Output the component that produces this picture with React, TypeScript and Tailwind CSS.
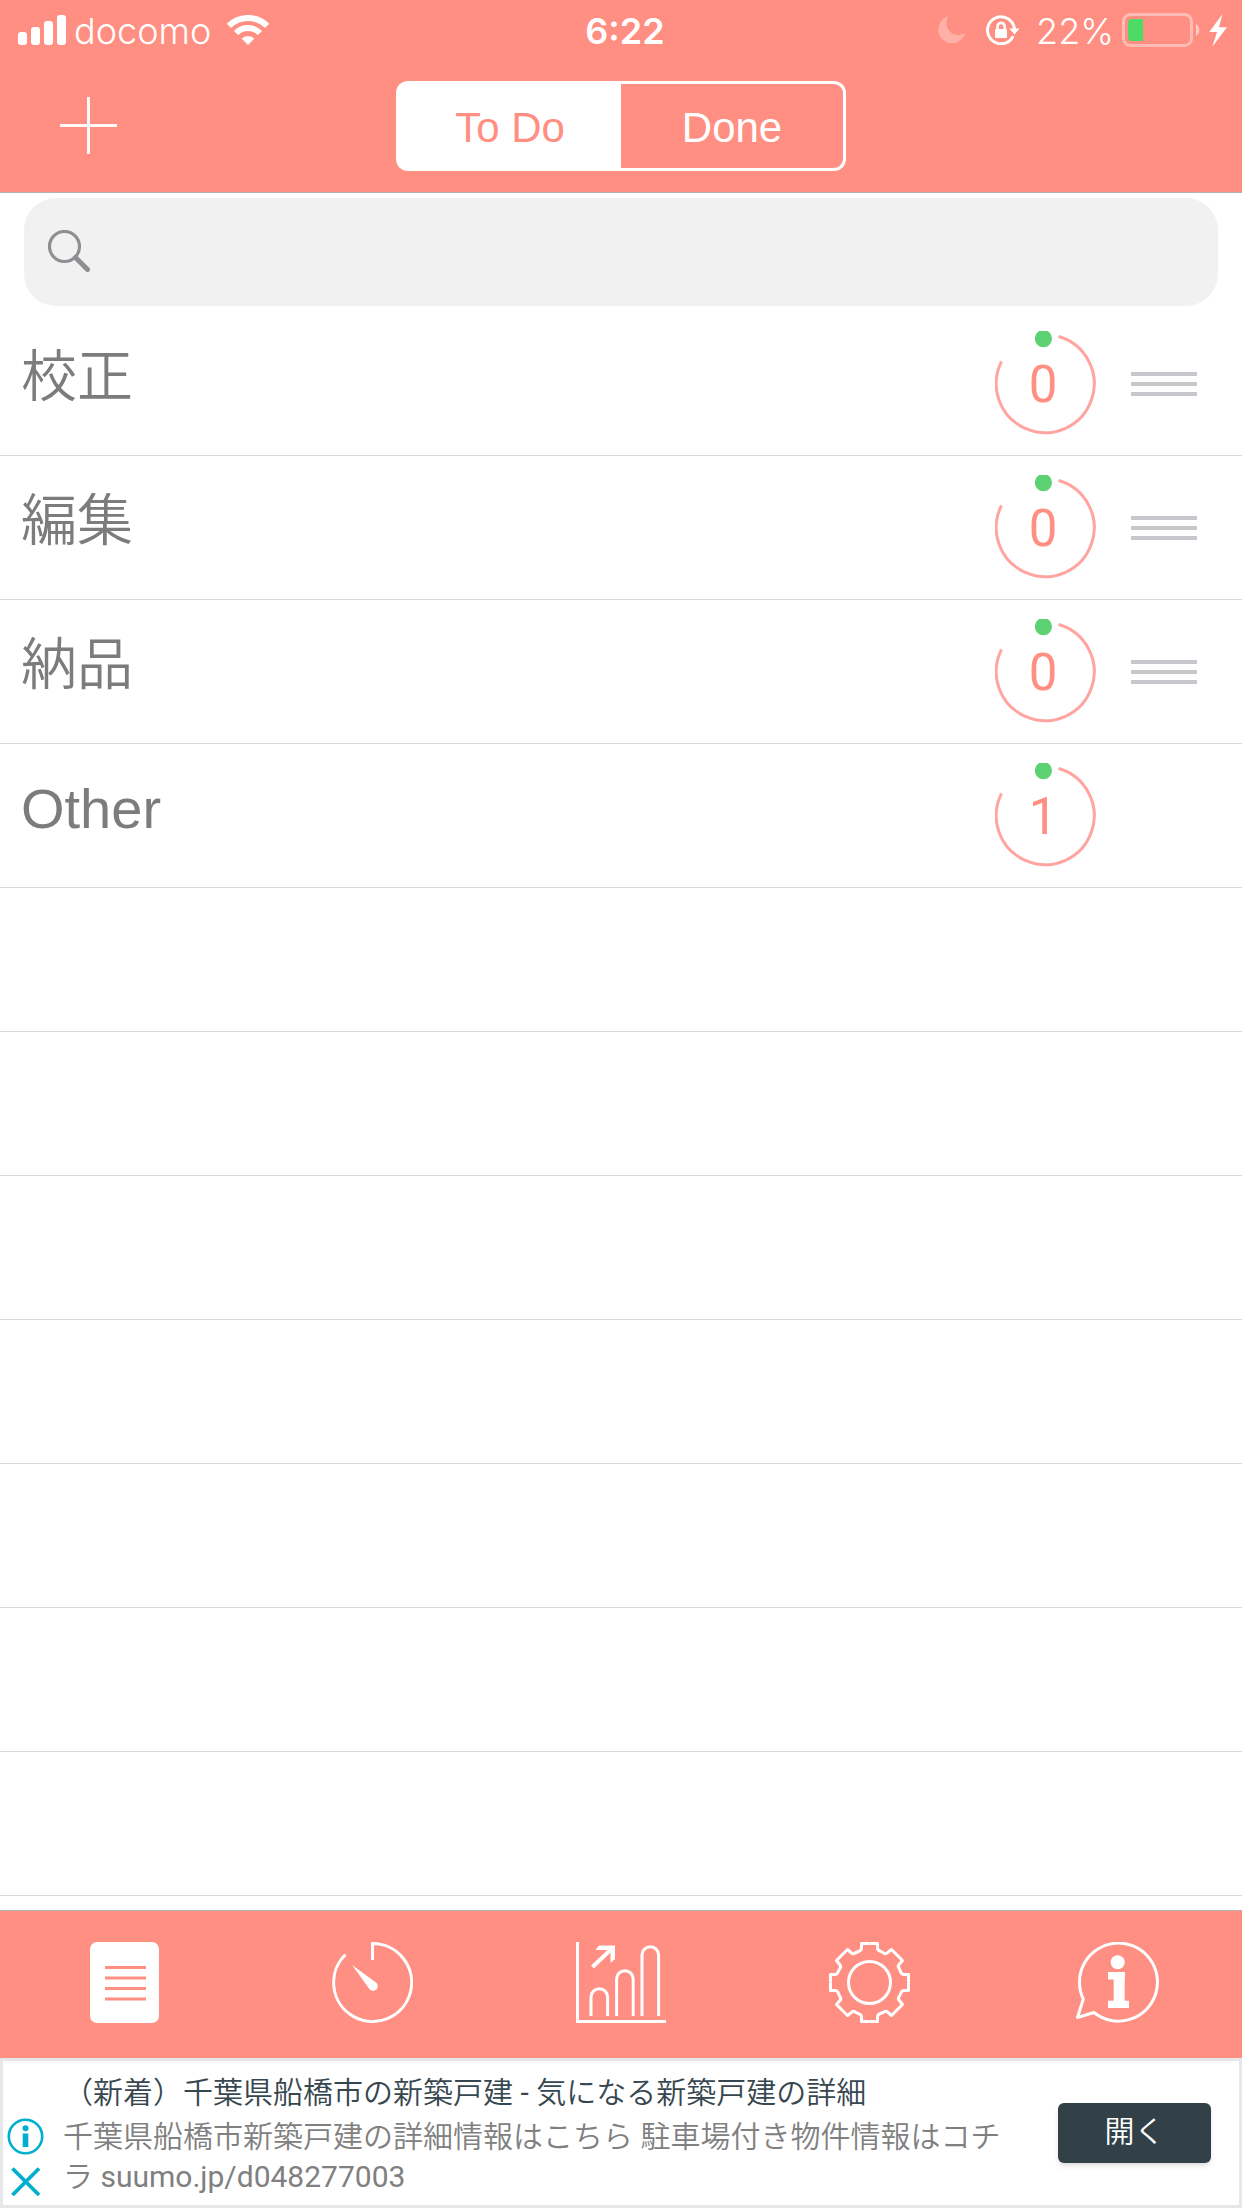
import { useState } from "react";

type Task = { name: string; count: number; movable: boolean };

const TASKS: Task[] = [
  { name: "校正", count: 0, movable: true },
  { name: "編集", count: 0, movable: true },
  { name: "納品", count: 0, movable: true },
  { name: "Other", count: 1, movable: false },
];

const EMPTY_ROWS = 7;

function StatusBar() {
  return (
    <div className="grid h-15 grid-cols-[1fr_auto_1fr] items-center pr-3.5 pl-[18px] font-['Inter',sans-serif] text-[36px] leading-none">
      <div className="flex items-center">
        <svg width="48" height="30" fill="currentColor">
          <rect x="0" y="17" width="9" height="13" rx="3" />
          <rect x="13" y="12" width="9" height="18" rx="3" />
          <rect x="26" y="6" width="9" height="24" rx="3" />
          <rect x="39" y="0" width="9" height="30" rx="3" />
        </svg>
        <span className="ml-2 pt-0.5 font-light">docomo</span>
        <svg className="ml-4" width="42" height="30" fill="none" stroke="currentColor" strokeWidth="6">
          <path d="M1.9 10.9A27 27 0 0 1 40.1 10.9" />
          <path d="M9 18A17 17 0 0 1 33 18" />
          <path d="M21 30L14.6 23.6A9.2 9.2 0 0 1 27.4 23.6Z" fill="currentColor" stroke="none" />
        </svg>
      </div>

      <span className="pt-0.5 pl-1 font-semibold">6:22</span>

      <div className="flex items-center justify-end">
        <svg className="opacity-30" width="28" height="28" fill="currentColor">
          <path d="M10.5.3A13.7 13.7 0 1 0 27.2 17A12 12 0 0 1 10.5.3Z" />
        </svg>
        <svg className="ml-5" width="34" height="30" fill="none" stroke="currentColor" strokeWidth="3">
          <path d="M26.6 22.2A13.5 13.5 0 1 1 28.4 13.5" strokeLinecap="round" />
          <path d="M23.3 13.5H33.6L28.5 19.4Z" fill="currentColor" stroke="none" />
          <rect x="9" y="14" width="12" height="9" rx="1" fill="currentColor" stroke="none" />
          <path d="M11.5 15V11.5A3.6 3.6 0 0 1 18.7 11.5V15" strokeWidth="2.6" />
        </svg>
        <span className="ml-4 pt-0.5 font-light">22%</span>
        <svg className="ml-2" width="79" height="34" fill="none">
          <rect x="1.5" y="1.5" width="68" height="31" rx="7" stroke="#fff" strokeOpacity=".4" strokeWidth="3" />
          <path d="M74 11A7 7 0 0 1 74 23Z" fill="#fff" fillOpacity=".5" />
          <path d="M21 6H10A4 4 0 0 0 6 10V24A4 4 0 0 0 10 28H21Z" fill="#4cd964" />
        </svg>
        <svg className="ml-2" width="19" height="33" fill="currentColor">
          <path d="M13.3.3L.3 18H8L3.3 32.7L18 13.3H10Z" />
        </svg>
      </div>
    </div>
  );
}

function CountRing({ count }: { count: number }) {
  return (
    <div className="relative flex h-[104px] w-[102px] shrink-0 items-center justify-center">
      <svg className="absolute inset-0" width="102" height="104" fill="none">
        <path d="M63.5 5.5A49 49 0 1 1 6.5 30.5" stroke="#ffa49e" strokeWidth="3" />
        <circle cx="48.4" cy="7.6" r="8.6" fill="#5dd272" />
      </svg>
      <span className="relative pt-1 pr-1.5 font-['Roboto',sans-serif] text-[51px] leading-none text-[#ff8f82]">
        {count}
      </span>
    </div>
  );
}

function TaskRow({ task }: { task: Task }) {
  return (
    <li className="flex h-36 items-center border-b border-[#d9d9d9] pr-11 pb-0.5 pl-[21px]">
      <span className="flex-1 pb-3 text-[56px] leading-none font-[350] text-[#7c7c7c]">{task.name}</span>
      <CountRing count={task.count} />
      <div className="ml-[33px] w-17">
        {task.movable && (
          <button aria-label={`Move ${task.name}`} className="flex w-full flex-col gap-1.5 px-px pt-0.5">
            <span className="h-1 w-full bg-[#c7c7cc]" />
            <span className="h-1 w-full bg-[#c7c7cc]" />
            <span className="h-1 w-full bg-[#c7c7cc]" />
          </button>
        )}
      </div>
    </li>
  );
}

function ListIcon() {
  return (
    <svg width="69" height="81">
      <rect width="69" height="81" rx="7" fill="#fff" />
      <path d="M15 25.5H56M15 36H56M15 46.5H56M15 57H56" stroke="#ff8f82" strokeWidth="3" />
    </svg>
  );
}

function TimerIcon() {
  return (
    <svg width="81" height="81" fill="none" stroke="#fff" strokeWidth="3">
      <path d="M40.5 18V1.5A39 39 0 1 1 13.5 12.5" />
      <path d="M20 23L44 40.5A4.7 4.7 0 1 1 37 46.5Z" fill="#fff" stroke="none" />
    </svg>
  );
}

function ChartIcon() {
  return (
    <svg width="90" height="81" fill="none" stroke="#fff" strokeWidth="3">
      <path d="M1.5 0V79.5H90" />
      <path d="M15 74V55A8.3 8.3 0 0 1 31.6 55V74" />
      <path d="M40.6 74V37A8.3 8.3 0 0 1 57.2 37V74" />
      <path d="M66 74V13A8.3 8.3 0 0 1 82.6 13V74" />
      <path d="M16.5 25L37 5.5" strokeWidth="4" />
      <path d="M23 3.5H39V17L34.5 21V8H19.5Z" fill="#fff" stroke="none" />
    </svg>
  );
}

// one quarter of the outline, turned round the centre
const GEAR_QUARTER =
  "M40.5 1.5H48.5V6Q48.5 8 50.5 8.8L54 10.5Q56 12.5 58 11L62.5 7.5L73.5 18.5L70 22.5Q68.5 24 70 26L71.5 29.5Q72.5 32.5 75 32.5H79.5V40.5";

function GearIcon() {
  return (
    <svg width="81" height="81" fill="none" stroke="#fff" strokeWidth="3" strokeLinejoin="round">
      {[0, 90, 180, 270].map((angle) => (
        <path key={angle} d={GEAR_QUARTER} transform={`rotate(${angle} 40.5 40.5)`} />
      ))}
      <circle cx="40.5" cy="40.5" r="21" />
    </svg>
  );
}

function InfoIcon() {
  return (
    <svg width="83" height="81" fill="none" stroke="#fff" strokeWidth="3" strokeLinejoin="round">
      <path d="M18 70.5A39 39 0 1 0 7.3 57L1.5 75.5Z" />
      <g fill="#fff" stroke="none">
        <circle cx="41.7" cy="20.3" r="7" />
        <rect x="32" y="30" width="16.7" height="7.5" />
        <rect x="37.7" y="30" width="11" height="36" />
        <rect x="32" y="58.7" width="21" height="7.3" />
      </g>
    </svg>
  );
}

const TABS = [
  { label: "List", icon: <ListIcon /> },
  { label: "Timer", icon: <TimerIcon /> },
  { label: "Statistics", icon: <ChartIcon /> },
  { label: "Settings", icon: <GearIcon /> },
  { label: "Information", icon: <InfoIcon /> },
];

function AdBanner() {
  return (
    <aside className="flex h-[150px] items-center border-[3px] border-[#e6e7e8] bg-white pr-7 font-['Roboto','Noto_Sans_CJK_JP_DemiLight','Noto_Sans_CJK_JP',sans-serif] text-[30px]">
      <div className="flex w-[60px] shrink-0 flex-col gap-3 pt-12 pl-1">
        <button aria-label="Ad info">
          <svg width="37" height="37" fill="none">
            <circle cx="18.5" cy="18.5" r="16.7" stroke="#00aecd" strokeWidth="2.6" />
            <circle cx="18.5" cy="10.3" r="3" fill="#00aecd" />
            <rect x="15.7" y="15.5" width="5.6" height="13.5" fill="#00aecd" />
          </svg>
        </button>
        <button aria-label="Close ad">
          <svg width="37" height="30">
            <path d="M5.5 1.5L32 28M32 1.5L5.5 28" stroke="#00aecd" strokeWidth="3.8" />
          </svg>
        </button>
      </div>
      <div className="flex-1 pt-1 leading-10" lang="ja">
        <p className="pb-1 text-[#37474f]">（新着）千葉県船橋市の新築戸建 - 気になる新築戸建の詳細</p>
        <p className="text-[#808080]">
          千葉県船橋市新築戸建の詳細情報はこちら 駐車場付き物件情報はコチラ suumo.jp/d048277003
        </p>
      </div>
      <button className="ml-10 h-15 w-[153px] shrink-0 rounded-md bg-[#324048] pb-1 text-white shadow-md">
        開く
      </button>
    </aside>
  );
}

export default function App() {
  const [view, setView] = useState("To Do");
  const [query, setQuery] = useState("");

  return (
    <div className="flex min-h-screen flex-col bg-white font-['Liberation_Sans','Noto_Sans_CJK_JP',sans-serif]">
      <header className="border-b border-[#b2b2b2] bg-[#ff8f82] text-white">
        <StatusBar />
        <nav className="grid h-33 grid-cols-[1fr_auto_1fr] items-center">
          <button aria-label="Add" className="mb-px ml-15 w-fit">
            <svg className="block" width="57" height="57" stroke="#fff" strokeWidth="3" strokeOpacity=".95">
              <path d="M28.5 0V57M0 28.5H57" />
            </svg>
          </button>
          <div className="flex h-[90px] w-[450px] text-[42px]">
            {["To Do", "Done"].map((name) => (
              <button
                key={name}
                onClick={() => setView(name)}
                className={`w-1/2 border-[3px] border-white pt-0.5 first:rounded-l-xl first:border-r-0 last:rounded-r-xl last:border-l-0 ${
                  view === name ? "bg-white text-[#ff8f82]" : "text-white"
                }`}
              >
                {name}
              </button>
            ))}
          </div>
        </nav>
      </header>

      <main className="flex-1">
        <div className="px-6 pt-[5px] pb-1.5">
          <label className="flex h-27 items-center rounded-[32px] bg-[#f1f1f1] pb-0.5 pl-6">
            <svg width="42" height="42" fill="none" stroke="#8e8e93">
              <circle cx="16.5" cy="16.5" r="15" strokeWidth="3.2" />
              <path d="M27.5 27.5L39.5 39.5" strokeWidth="5" strokeLinecap="round" />
            </svg>
            <input
              type="search"
              aria-label="Search"
              value={query}
              onChange={(e) => setQuery(e.target.value)}
              className="ml-4 h-full flex-1 bg-transparent text-[42px] text-[#808080] outline-none"
            />
          </label>
        </div>

        <ul>
          {TASKS.map((task) => (
            <TaskRow key={task.name} task={task} />
          ))}
          {Array.from({ length: EMPTY_ROWS }, (_, i) => (
            <li key={i} className="h-36 border-b border-[#d9d9d9]" />
          ))}
        </ul>
      </main>

      <footer>
        <nav className="grid h-37 grid-cols-5 border-t border-[#b2b2b2] bg-[#ff8f82] pb-1">
          {TABS.map((tab) => (
            <button key={tab.label} aria-label={tab.label} className="flex items-center justify-center">
              {tab.icon}
            </button>
          ))}
        </nav>
        <AdBanner />
      </footer>
    </div>
  );
}
